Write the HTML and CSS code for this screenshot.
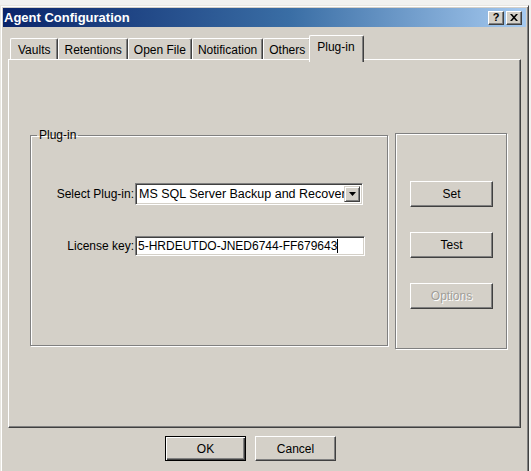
FILE: index.html
```html
<!DOCTYPE html>
<html lang="en">
<head>
  <meta charset="UTF-8">
  <title>Agent Configuration</title>
  <link rel="stylesheet" href="styles.css">
</head>
<body>
  <div class="window">
    <div class="titlebar">
      <span class="title">Agent Configuration</span>
      <div class="caption-buttons">
        <span class="cap-btn help">?</span>
        <span class="cap-btn close">
          <svg width="8" height="7" viewBox="0 0 8 7"><path d="M0 0h2l2 2.2L6 0h2L5 3.5 8 7H6L4 4.8 2 7H0l3-3.5z" fill="#000"/></svg>
        </span>
      </div>
    </div>

    <div class="dialog">
      <div class="tabs">
        <div class="tab">Vaults</div>
        <div class="tab">Retentions</div>
        <div class="tab">Open File</div>
        <div class="tab">Notification</div>
        <div class="tab">Others</div>
        <div class="tab active">Plug-in</div>
      </div>

      <div class="panel">
        <div class="panel-row">
          <fieldset class="group">
            <legend>Plug-in</legend>
            <div class="field first">
              <label>Select Plug-in:</label>
              <div class="combo">
                <span class="combo-text">MS SQL Server Backup and Recovery</span>
                <span class="combo-arrow">
                  <svg width="7" height="4" viewBox="0 0 7 4"><path d="M0 0h7L3.5 4z" fill="#000"/></svg>
                </span>
              </div>
            </div>
            <div class="field">
              <label>License key:</label>
              <div class="textbox">5-HRDEUTDO-JNED6744-FF679643<span class="caret"></span></div>
            </div>
          </fieldset>

          <div class="side">
            <button class="btn">Set</button>
            <button class="btn">Test</button>
            <button class="btn" disabled>Options</button>
          </div>
        </div>
      </div>

      <div class="footer">
        <button class="btn default">OK</button>
        <button class="btn">Cancel</button>
      </div>
    </div>
  </div>
</body>
</html>
```

FILE: styles.css
```css
body {
  margin: 0;
  background-color: #f2f2f0;
  font-family: "Liberation Sans", Arial, sans-serif;
  font-size: 12px;
  color: #000;
}

/* Window frame */
.window {
  margin-top: 5px;
  width: 529px;
  height: 470px;
  box-sizing: border-box;
  padding: 1px;
  background-color: #d4d0c8;
  border: 1px solid;
  border-color: #e8e6e0 #404040 #404040 #e8e6e0;
  box-shadow: inset 1px 1px #fff, inset -1px -1px #808080;
  display: flex;
  flex-direction: column;
}

/* Title bar */
.titlebar {
  height: 19px;
  margin: 1px 1px 0 1px;
  background: linear-gradient(to right, #0a246a, #3a6ea5 55%, #a6caf0);
  display: flex;
  align-items: center;
  justify-content: space-between;
}

.title {
  color: #fff;
  font-weight: bold;
  font-size: 13px;
  padding-left: 1px;
}

.caption-buttons {
  display: flex;
  gap: 2px;
  padding-right: 4px;
}

.cap-btn {
  width: 16px;
  height: 14px;
  box-sizing: border-box;
  background-color: #d4d0c8;
  border: 1px solid;
  border-color: #fff #404040 #404040 #fff;
  box-shadow: inset -1px -1px #808080;
  display: flex;
  align-items: center;
  justify-content: center;
  font-weight: bold;
  font-size: 11px;
  line-height: 1;
}

/* Dialog body */
.dialog {
  flex: 1;
  padding: 8px 6px 0 6px;
  display: flex;
  flex-direction: column;
}

/* Tabs */
.tabs {
  display: flex;
  height: 25px;
  padding-left: 2px;
  align-items: flex-start;
}

.tab {
  margin-top: 3px;
  height: 22px;
  box-sizing: border-box;
  padding: 0 5px;
  line-height: 22px;
  border-top: 1px solid #fff;
  border-left: 1px solid #fff;
  border-right: 1px solid #404040;
  box-shadow: inset -1px 0 #808080;
  border-radius: 2px 2px 0 0;
  white-space: nowrap;
}

.tab:first-child {
  padding: 0 7px;
}

.tab.active {
  position: relative;
  z-index: 1;
  margin: 0 0 0 -2px;
  height: 27px;
  padding: 0 8px 0 7px;
  line-height: 22px;
  background-color: #d4d0c8;
}

/* Tab page */
.panel {
  height: 369px;
  box-sizing: border-box;
  border: 1px solid;
  border-color: #fff #404040 #404040 #fff;
  box-shadow: inset -1px -1px #808080;
  margin-top: -1px;
}

.panel-row {
  display: flex;
  align-items: flex-start;
  padding: 68px 0 0 21px;
  gap: 7px;
}

.group {
  margin: 0;
  padding: 0;
  width: 358px;
  height: 218px;
  box-sizing: border-box;
  border: 1px solid #808080;
  box-shadow: inset 1px 1px #fff, 1px 1px #fff;
}

.group legend {
  margin-left: 6px;
  padding: 0 2px;
  line-height: 14px;
}

.field {
  display: flex;
  align-items: center;
  margin-top: 31px;
}

.field.first {
  margin-top: 41px;
}

.field label {
  width: 103px;
  padding-right: 1px;
  text-align: right;
  white-space: nowrap;
}

/* Combo box */
.combo {
  width: 228px;
  height: 22px;
  box-sizing: border-box;
  background-color: #fff;
  border: 1px solid;
  border-color: #808080 #fff #fff #808080;
  box-shadow: inset 1px 1px #404040, inset -1px -1px #d4d0c8;
  padding: 2px;
  display: flex;
  align-items: center;
}

.combo-text {
  flex: 1;
  overflow: hidden;
  white-space: nowrap;
  padding-left: 1px;
  font-size: 12.5px;
}

.combo-arrow {
  width: 16px;
  height: 16px;
  box-sizing: border-box;
  background-color: #d4d0c8;
  border: 1px solid;
  border-color: #d4d0c8 #404040 #404040 #d4d0c8;
  box-shadow: inset 1px 1px #fff, inset -1px -1px #808080;
  display: flex;
  align-items: center;
  justify-content: center;
}

/* Text box */
.textbox {
  width: 230px;
  height: 20px;
  box-sizing: border-box;
  background-color: #fff;
  border: 1px solid;
  border-color: #808080 #fff #fff #808080;
  box-shadow: inset 1px 1px #404040, inset -1px -1px #d4d0c8;
  padding: 0 2px;
  line-height: 18px;
  white-space: nowrap;
  font-size: 12px;
  display: flex;
  align-items: center;
}

.caret {
  display: inline-block;
  width: 1px;
  height: 14px;
  background-color: #000;
}

/* Button column */
.side {
  margin-top: 5px;
  width: 112px;
  height: 216px;
  box-sizing: border-box;
  border: 1px solid #808080;
  box-shadow: inset 1px 1px #fff, 1px 1px #fff;
  padding: 47px 0 0 14px;
  display: flex;
  flex-direction: column;
  gap: 25px;
}

/* Push buttons */
.btn {
  width: 83px;
  height: 26px;
  margin: 0;
  padding: 0;
  font-family: "Liberation Sans", Arial, sans-serif;
  font-size: 12px;
  color: #000;
  background-color: #d4d0c8;
  border: 1px solid;
  border-color: #fff #404040 #404040 #fff;
  box-shadow: inset -1px -1px #808080;
}

.btn:disabled {
  color: #a09e98;
  text-shadow: 1px 1px #fff;
}

.footer {
  display: flex;
  gap: 9px;
  padding: 8px 0 0 157px;
}

.footer .btn {
  width: 81px;
  height: 25px;
}

.footer .btn.default {
  border: 1px solid #000;
  box-shadow: inset 1px 1px #fff, inset -1px -1px #404040, inset -2px -2px #808080;
}
```
